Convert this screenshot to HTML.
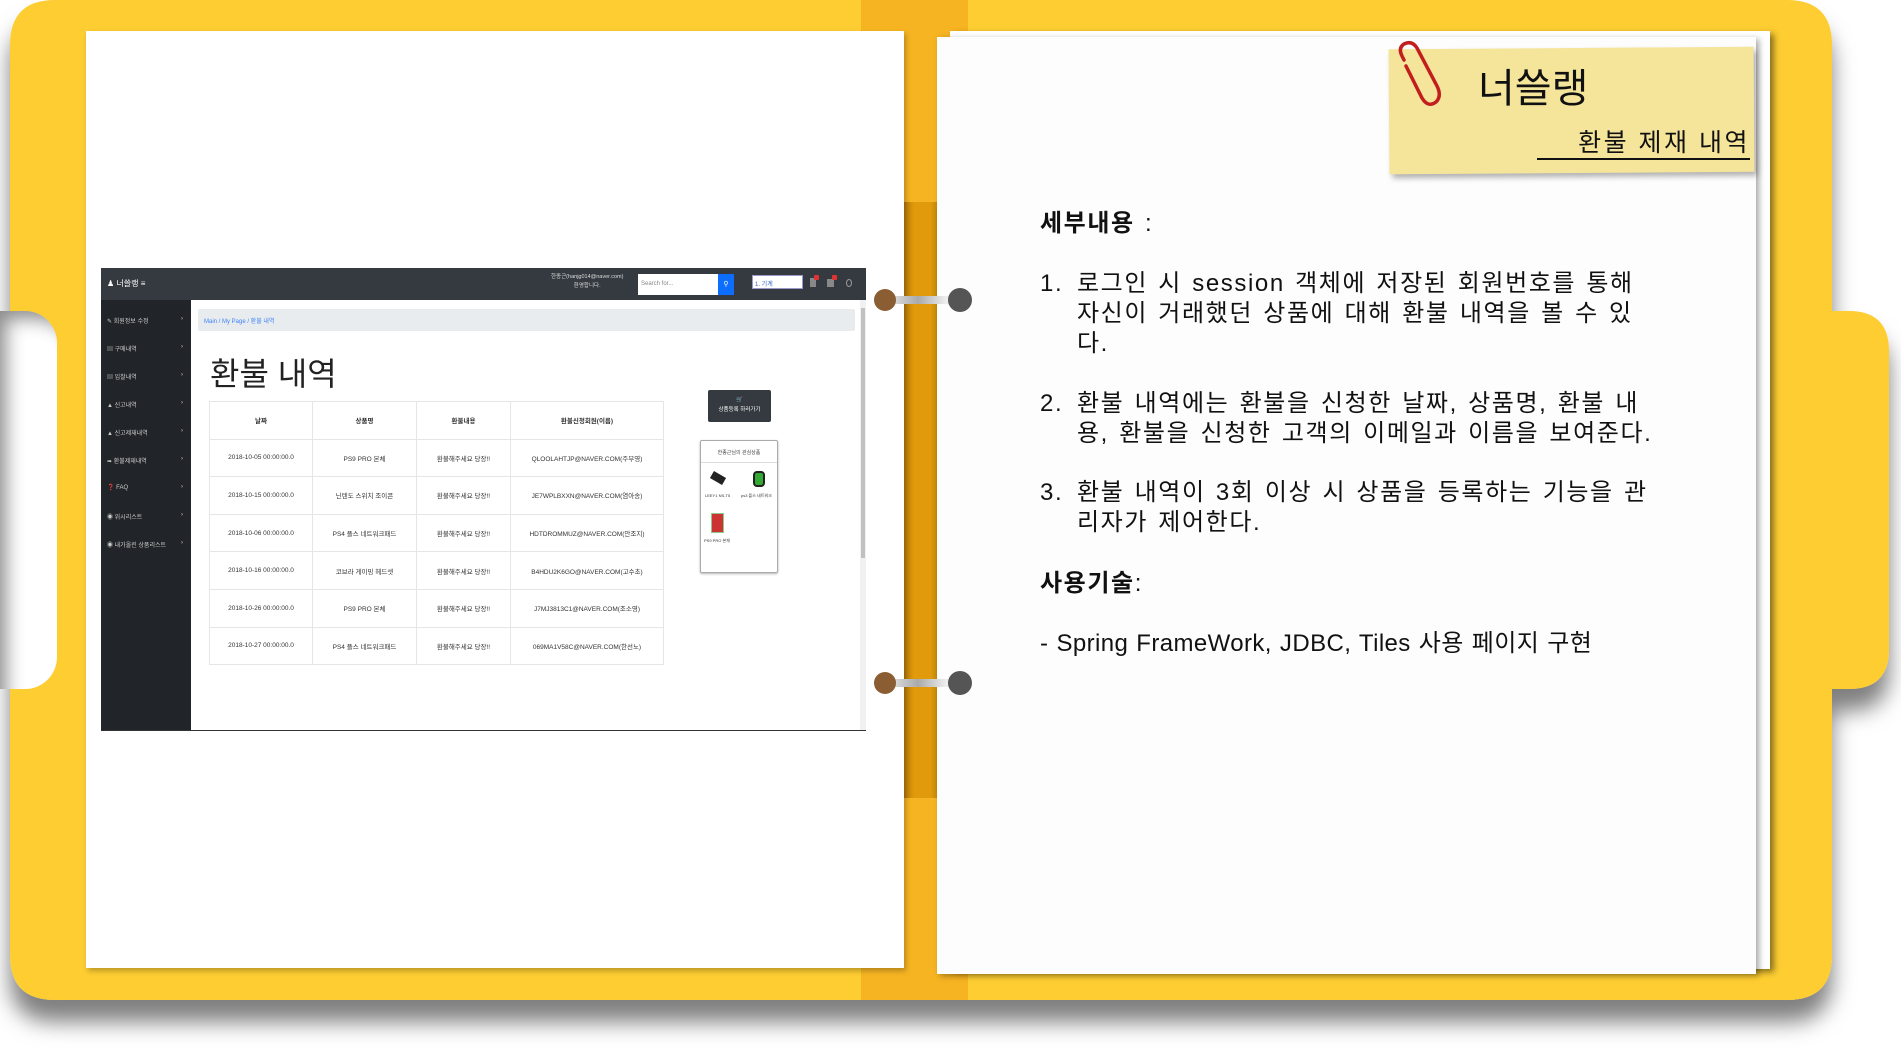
<!DOCTYPE html>
<html><head><meta charset="utf-8">
<style>
*{margin:0;padding:0;box-sizing:border-box}
body{width:1901px;height:1057px;background:#fff;position:relative;overflow:hidden;font-family:"Liberation Sans","Noto Sans CJK KR",sans-serif}
.abs{position:absolute}
.notch{left:0;top:311px;width:57px;height:378px;background:#fff;border-radius:0 32px 32px 0;box-shadow:inset 12px 14px 18px -6px rgba(0,0,0,.45)}
.spine{left:861px;top:0;width:107px;height:1000px;background:#F6B422}
.spine2{left:904px;top:202px;width:33px;height:596px;background:linear-gradient(90deg,#B87A0A,#E09A0B 30%,#E09A0B 80%,#C98A0A)}
.pageL{left:86px;top:31px;width:818px;height:937px;background:#fff;box-shadow:2px 3px 5px rgba(0,0,0,.25)}
.pageR2{left:950px;top:31px;width:820px;height:938px;background:#fff;box-shadow:4px 3px 6px rgba(0,0,0,.45)}
.pageR{left:937px;top:37px;width:819px;height:937px;background:#fdfdfd;box-shadow:3px 2px 6px rgba(0,0,0,.35)}
.ring .l{position:absolute;left:0;top:1px;width:22px;height:22px;border-radius:50%;background:#8A5E32}
.ring .r{position:absolute;left:74px;top:0;width:24px;height:24px;border-radius:50%;background:#555}
.ring .b{position:absolute;left:8px;top:8px;width:80px;height:8px;background:linear-gradient(90deg,#f2f2f2,#aaa 45%,#eee 80%,#ddd)}
.note{left:1389px;top:48px;width:365px;height:125px;background:#F5E59B;box-shadow:3px 4px 6px rgba(0,0,0,.3);transform:rotate(-0.4deg)}
.txt{color:#111;font-size:24px;line-height:30px;letter-spacing:1.6px;word-spacing:2px;white-space:nowrap}
.shot{left:101px;top:268px;width:765px;height:463px;background:#fff;overflow:hidden;border-bottom:1px solid #333}
.nav{position:absolute;left:0;top:0;width:765px;height:32px;background:#343A40}
.side{position:absolute;left:0;top:32px;width:90px;height:431px;background:#212529}
.side div{position:absolute;left:6px;color:#ccc;font-size:6px;width:80px}
.side div span{position:absolute;right:4px}
table{border-collapse:collapse;position:absolute;left:108px;top:133px}
td{border:1px solid #e6e6e6;text-align:center;font-size:6.5px;color:#333;height:37.6px}
</style></head><body>
<svg class="abs" style="left:0;top:0" width="1901" height="1057">
<defs><filter id="sh" x="-5%" y="-5%" width="115%" height="120%"><feDropShadow dx="0" dy="22" stdDeviation="11" flood-color="#000" flood-opacity="0.5"/></filter></defs>
<path filter="url(#sh)" fill="#FDCD32" d="M55 0 H1787 Q1832 0 1832 45 V311 H1849 Q1889 311 1889 351 V649 Q1889 689 1849 689 H1832 V955 Q1832 1000 1787 1000 H55 Q10 1000 10 955 V45 Q10 0 55 0 Z"/>
</svg>
<div class="abs notch"></div>
<div class="abs spine"></div>
<div class="abs spine2"></div>
<div class="abs pageL"></div>
<div class="abs pageR2"></div>
<div class="abs pageR"></div>

<div class="abs shot">
 <div class="nav">
  <div style="position:absolute;left:6px;top:10px;color:#fff;font-size:8px">&#9823; 너쓸랭 &#8801;</div>
  <div style="position:absolute;left:450px;top:5px;color:#ddd;font-size:5.5px;text-align:center;line-height:9px">한종근(hanjg014@naver.com)<br>환영합니다.</div>
  <div style="position:absolute;left:537px;top:6px;width:80px;height:21px;background:#fff;font-size:6px;color:#888;padding:7px 3px">Search for...</div>
  <div style="position:absolute;left:617px;top:6px;width:16px;height:21px;background:#0d6efd;color:#fff;font-size:7px;text-align:center;line-height:21px">&#9906;</div>
  <div style="position:absolute;left:651px;top:7px;width:51px;height:14px;background:#fff;border:1px solid #99c;font-size:6px;color:#36c;padding:3px 2px">1. 기계</div>
  <div style="position:absolute;left:709px;top:10px;width:6px;height:9px;background:#888"></div><div style="position:absolute;left:713px;top:7px;width:5px;height:5px;background:#d33;border-radius:1px"></div>
  <div style="position:absolute;left:726px;top:11px;width:7px;height:8px;background:#888"></div><div style="position:absolute;left:731px;top:7px;width:5px;height:5px;background:#d33;border-radius:1px"></div>
  <div style="position:absolute;left:745px;top:11px;width:6px;height:8px;border:1px solid #999;border-radius:50%"></div>
 </div>
 <div class="side">
  <div style="top:16px">&#9998; 회원정보 수정<span>&#8250;</span></div>
  <div style="top:44px">&#9636; 구매내역<span>&#8250;</span></div>
  <div style="top:72px">&#9636; 입찰내역<span>&#8250;</span></div>
  <div style="top:100px">&#9650; 신고내역<span>&#8250;</span></div>
  <div style="top:128px">&#9650; 신고제재내역<span>&#8250;</span></div>
  <div style="top:156px">&#10144; 환불제재내역<span>&#8250;</span></div>
  <div style="top:184px">&#10067; FAQ<span>&#8250;</span></div>
  <div style="top:212px">&#9673; 위시리스트<span>&#8250;</span></div>
  <div style="top:240px">&#9673; 내가올린 상품리스트<span>&#8250;</span></div>
 </div>
 <div style="position:absolute;left:97px;top:41px;width:657px;height:22px;background:#e9ecef;border-radius:2px;font-size:6px;color:#3b82f6;padding:7px 6px">Main / My Page / 환불 내역</div>
 <div style="position:absolute;left:109px;top:88px;font-size:32px;color:#222;line-height:36px">환불 내역</div>
 <table>
  <tr style="font-weight:bold"><td style="width:103px">날짜</td><td style="width:104px">상품명</td><td style="width:94px">환불내용</td><td style="width:153px">환불신청회원(이름)</td></tr>
  <tr><td>2018-10-05 00:00:00.0</td><td>PS9 PRO 본체</td><td>환불해주세요 당장!!</td><td>QLOOLAHTJP@NAVER.COM(주부영)</td></tr>
  <tr><td>2018-10-15 00:00:00.0</td><td>닌텐도 스위치 조이콘</td><td>환불해주세요 당장!!</td><td>JE7WPLBXXN@NAVER.COM(염아송)</td></tr>
  <tr><td>2018-10-06 00:00:00.0</td><td>PS4 플스 네트워크패드</td><td>환불해주세요 당장!!</td><td>HDTDROMMUZ@NAVER.COM(안조지)</td></tr>
  <tr><td>2018-10-16 00:00:00.0</td><td>코브라 게이밍 헤드셋</td><td>환불해주세요 당장!!</td><td>B4HDU2K6GO@NAVER.COM(고수초)</td></tr>
  <tr><td>2018-10-26 00:00:00.0</td><td>PS9 PRO 본체</td><td>환불해주세요 당장!!</td><td>J7MJ3813C1@NAVER.COM(조소영)</td></tr>
  <tr><td>2018-10-27 00:00:00.0</td><td>PS4 플스 네트워크패드</td><td>환불해주세요 당장!!</td><td>069MA1V58C@NAVER.COM(한선노)</td></tr>
 </table>
 <div style="position:absolute;left:607px;top:122px;width:63px;height:32px;background:#343A40;border-radius:2px;color:#fff;font-size:5.5px;text-align:center;padding-top:5px;line-height:10px">&#128722;<br>상품등록 하러가기</div>
 <div style="position:absolute;left:599px;top:172px;width:78px;height:133px;border:1px solid #aaa;border-radius:2px;box-shadow:0 1px 2px rgba(0,0,0,.3)">
  <div style="font-size:5px;color:#444;text-align:center;padding:8px 0 6px;border-bottom:1px solid #ddd">한종근님의 관심상품</div>
  <div style="position:absolute;left:10px;top:33px;width:14px;height:8px;background:#222;transform:rotate(30deg)"></div>
  <div style="position:absolute;left:52px;top:30px;width:12px;height:16px;background:#3a3;border-radius:4px;border:2px solid #222"></div>
  <div style="position:absolute;left:4px;top:52px;font-size:4px;color:#333">LEEY1 NS-T5</div>
  <div style="position:absolute;left:40px;top:52px;font-size:4px;color:#333">ps3 플스 네트워크</div>
  <div style="position:absolute;left:10px;top:72px;width:13px;height:20px;background:#c33;border:1px solid #8c8"></div>
  <div style="position:absolute;left:3px;top:97px;font-size:4px;color:#333">PS9 PRO 본체</div>
 </div>
 <div style="position:absolute;left:759px;top:32px;width:6px;height:431px;background:#f1f1f1"></div>
 <div style="position:absolute;left:760px;top:40px;width:4px;height:250px;background:#c1c1c1"></div>
</div>

<div class="abs ring" style="left:874px;top:288px;width:100px;height:24px"><div class="b"></div><div class="l"></div><div class="r"></div></div>
<div class="abs ring" style="left:874px;top:671px;width:100px;height:24px"><div class="b"></div><div class="l"></div><div class="r"></div></div>

<div class="abs note"></div>
<svg class="abs" style="left:1392px;top:40px" width="62" height="68" viewBox="0 0 62 68"><path d="M14 26 L30 58 Q36 68 44 62 Q50 56 45 46 L25 8 Q20 0 12 4 Q6 8 10 16 L12 20" fill="none" stroke="#C21E1E" stroke-width="3.5" stroke-linecap="round"/></svg>
<div class="abs" style="left:1478px;top:64px;font-size:40px;color:#111;line-height:50px">너쓸랭</div>
<div class="abs" style="left:1537px;top:128px;width:213px;border-bottom:2px solid #111;font-size:25px;line-height:30px;text-align:right;color:#111;letter-spacing:2.5px">환불 제재 내역</div>

<div class="abs txt" style="left:1040px;top:209px"><b>세부내용</b> :</div>
<div class="abs txt" style="left:1040px;top:269px">1.</div>
<div class="abs txt" style="left:1077px;top:269px">로그인 시 session 객체에 저장된 회원번호를 통해<br>자신이 거래했던 상품에 대해 환불 내역을 볼 수 있<br>다.</div>
<div class="abs txt" style="left:1040px;top:389px">2.</div>
<div class="abs txt" style="left:1077px;top:389px">환불 내역에는 환불을 신청한 날짜, 상품명, 환불 내<br>용, 환불을 신청한 고객의 이메일과 이름을 보여준다.</div>
<div class="abs txt" style="left:1040px;top:478px">3.</div>
<div class="abs txt" style="left:1077px;top:478px">환불 내역이 3회 이상 시 상품을 등록하는 기능을 관<br>리자가 제어한다.</div>
<div class="abs txt" style="left:1040px;top:569px"><b>사용기술</b>:</div>
<div class="abs txt" style="left:1040px;top:629px;letter-spacing:0.4px;word-spacing:1px">- Spring FrameWork, JDBC, Tiles 사용 페이지 구현</div>
</body></html>
